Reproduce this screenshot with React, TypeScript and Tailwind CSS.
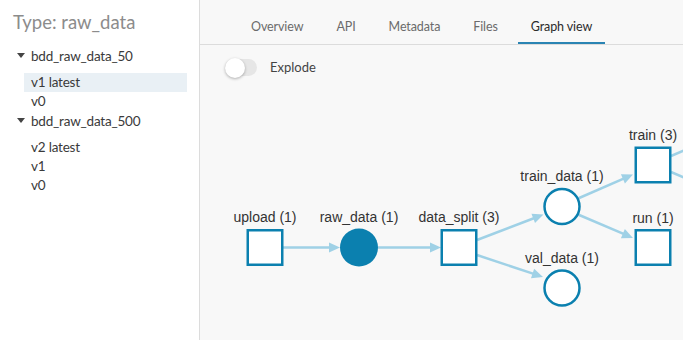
import React from "react";

const EDGE = "#9fd1e6";
const NODE = "#0b80af";

function Arrow({ x1, y1, x2, y2 }: { x1: number; y1: number; x2: number; y2: number }) {
  const dx = x2 - x1;
  const dy = y2 - y1;
  const len = Math.sqrt(dx * dx + dy * dy);
  const ux = dx / len;
  const uy = dy / len;
  const L = 11;
  const W = 5;
  const bx = x2 - ux * L;
  const by = y2 - uy * L;
  const p1 = `${x2},${y2}`;
  const p2 = `${bx - uy * W},${by + ux * W}`;
  const p3 = `${bx + uy * W},${by - ux * W}`;
  return (
    <g>
      <line x1={x1} y1={y1} x2={bx + ux * 2} y2={by + uy * 2} stroke={EDGE} strokeWidth={2.5} />
      <polygon points={`${p1} ${p2} ${p3}`} fill={EDGE} />
    </g>
  );
}

function Label({ x, y, text }: { x: number; y: number; text: string }) {
  return (
    <text x={x} y={y} textAnchor="middle" fontSize={14} fill="#333" fontFamily="'Liberation Sans', Arial, sans-serif">
      {text}
    </text>
  );
}

function Square({ x, y }: { x: number; y: number }) {
  return <rect x={x + 1.25} y={y + 1.25} width={34.5} height={34.5} fill="#fff" stroke={NODE} strokeWidth={2.5} />;
}

function Circle({ cx, cy, filled }: { cx: number; cy: number; filled?: boolean }) {
  return filled ? (
    <circle cx={cx} cy={cy} r={19} fill={NODE} />
  ) : (
    <circle cx={cx} cy={cy} r={17.5} fill="#fff" stroke={NODE} strokeWidth={2.5} />
  );
}

function Graph() {
  return (
    <svg width={483} height={250} className="block">
      <g transform="translate(-200,-90)">
        <Arrow x1={283} y1={247.5} x2={340} y2={247.5} />
        <Arrow x1={378} y1={247.5} x2={441} y2={247.5} />
        <Arrow x1={477} y1={240} x2={543.5} y2={214.5} />
        <Arrow x1={477} y1={255} x2={543} y2={277} />
        <Arrow x1={578} y1={198.5} x2={633} y2={174.5} />
        <Arrow x1={578} y1={214.5} x2={633} y2={238} />
        <line x1={671} y1={156} x2={690} y2={148} stroke={EDGE} strokeWidth={2.5} />
        <line x1={671} y1={172} x2={690} y2={180} stroke={EDGE} strokeWidth={2.5} />

        <Square x={246.5} y={229} />
        <Circle cx={359} cy={247.5} filled />
        <Square x={440.5} y={229} />
        <Circle cx={562} cy={206.5} />
        <Circle cx={562} cy={288} />
        <Square x={634.5} y={146.5} />
        <Square x={634.5} y={229} />

        <Label x={265} y={222} text="upload (1)" />
        <Label x={359} y={222} text="raw_data (1)" />
        <Label x={459} y={222} text="data_split (3)" />
        <Label x={562} y={181} text="train_data (1)" />
        <Label x={562} y={263} text="val_data (1)" />
        <Label x={653} y={140} text="train (3)" />
        <Label x={653} y={223} text="run (1)" />
      </g>
    </svg>
  );
}

function Caret() {
  return (
    <svg width={8} height={6} viewBox="0 0 8 6" className="mr-[6px] shrink-0">
      <polygon points="0,0 8,0 4,5" fill="#444" />
    </svg>
  );
}

export default function App() {
  const tabs = ["Overview", "API", "Metadata", "Files", "Graph view"];
  return (
    <div
      className="flex h-[340px] w-[683px] overflow-hidden bg-[#f8f8f8] text-[#333]"
      style={{ fontFamily: "Lato, 'Open Sans', sans-serif" }}
    >
      <aside className="w-[200px] shrink-0 border-r border-[#dcdcdc] bg-white">
        <div className="pl-[13px] pt-[9px] text-[18.5px] leading-[26px] text-[#8c8c8c]">Type: raw_data</div>
        <div className="mt-[11px] text-[13.5px] tracking-[-0.2px] text-[#3a3a3a]">
          <div className="flex h-[20px] items-center pl-[17px]">
            <Caret />
            bdd_raw_data_50
          </div>
          <div className="mt-[7px] ml-[24px] mr-[12px] flex h-[19px] items-center bg-[#e9f0f5] pl-[7px]">v1 latest</div>
          <div className="ml-[24px] flex h-[19px] items-center pl-[7px]">v0</div>
          <div className="flex h-[20px] items-center pl-[17px]">
            <Caret />
            bdd_raw_data_500
          </div>
          <div className="mt-[7px] ml-[24px] flex h-[19px] items-center pl-[7px]">v2 latest</div>
          <div className="ml-[24px] flex h-[19px] items-center pl-[7px]">v1</div>
          <div className="ml-[24px] flex h-[19px] items-center pl-[7px]">v0</div>
        </div>
      </aside>
      <main className="flex min-w-0 flex-1 flex-col">
        <div className="flex h-[45px] shrink-0 items-stretch border-b border-[#dcdcdc] pl-[38px] text-[12.5px] tracking-[-0.1px]">
          {tabs.map((t) => {
            const active = t === "Graph view";
            return (
              <div
                key={t}
                className={
                  active
                    ? "mr-[7px] flex items-center border-b-2 border-[#2a84b3] px-[13px] pt-[12px] text-[#2b2b2b]"
                    : "mr-[7px] flex items-center border-b-2 border-transparent px-[13px] pt-[12px] text-[#6b6b6b]"
                }
              >
                {t}
              </div>
            );
          })}
        </div>
        <div className="flex h-[45px] shrink-0 items-center pl-[25px]">
          <div className="relative h-[17px] w-[32px] rounded-full bg-[#e6e6e6]">
            <div className="absolute left-0 top-[-1.5px] h-[20px] w-[20px] rounded-full bg-white shadow-[0_1px_3px_rgba(0,0,0,0.3)]" />
          </div>
          <span className="ml-[13px] text-[13px] text-[#444]">Explode</span>
        </div>
        <Graph />
      </main>
    </div>
  );
}
